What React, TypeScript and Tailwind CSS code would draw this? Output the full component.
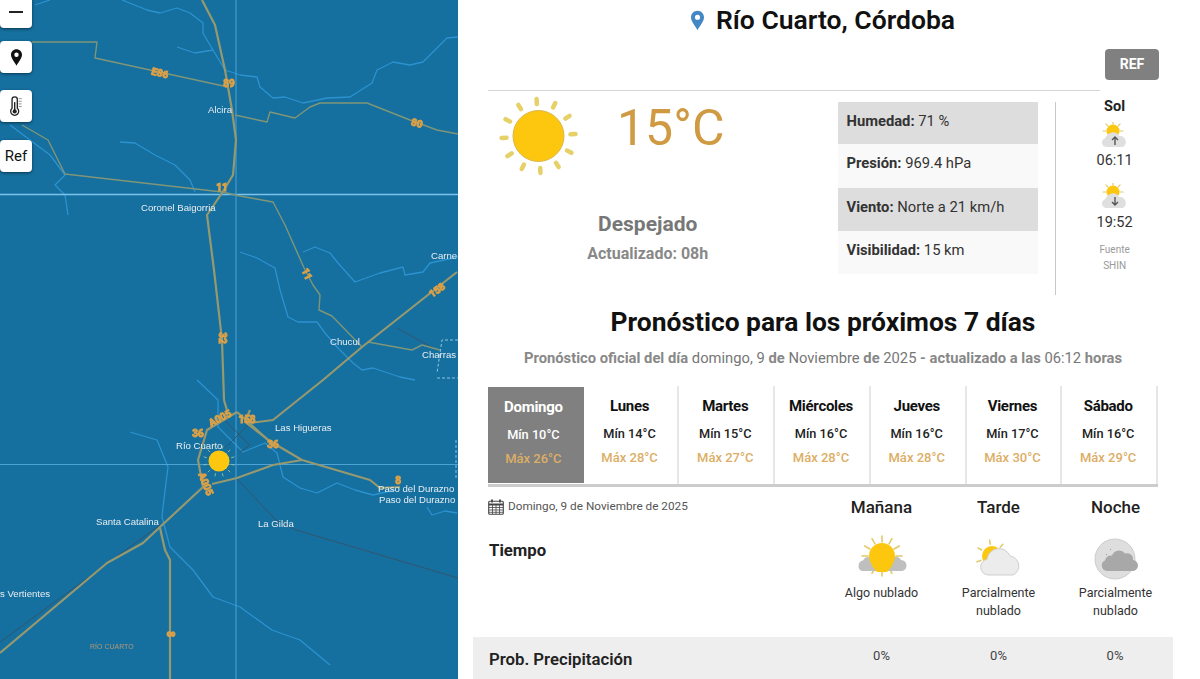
import React from 'react';

const thinRoads = [
  'M32 42 L97 42 L95 58 L150 70 L228 87',
  'M22 125 L48 140 L65 174 L222 192 L240 196 L273 202 L285 225 L305 270 L313 285 L320 295 L319 310 L332 316 L362 347',
  'M235 115 L267 122 L270 112 L295 118 L310 107 L320 103 L367 103 L410 120 L437 130 L458 134',
  'M368 342 L412 350 L422 345 L440 350',
];

const mainRoads = [
  'M202 0 L215 25 L225 70 L232 110 L236 140 L233 175 L222 193 L207 215 L214 270 L222 340 L224 400 L228 414',
  'M237 412 L207 430 L198 460 L203 487 L160 527 L143 543 L107 563 L0 653',
  'M237 412 L268 440 L302 460 L370 480 L380 488 L400 487',
  'M212 484 L237 478 L273 465 L302 460',
  'M160 528 L165 550 L170 560 L170 679',
  'M250 423 L273 420 L323 380 L362 347 L457 272',
  'M250 410 L245 422 L275 445',
];

const rails = [
  'M0 642 L160 525',
  'M397 328 L437 350',
  'M236 478 L276 520 L296 530 L458 578',
  'M224 420 L250 445 L240 452',
  'M250 423 L225 448',
];

const rivers = [
  'M122 0 L147 10 L160 13 L177 8 L190 13 L203 23 L203 33 L213 50 L225 70 L240 75 L257 77 L260 87 L273 98 L285 97 L303 103 L327 98 L350 97 L372 83 L377 70 L393 62 L410 65 L423 62 L447 38 L458 37',
  'M177 47 L195 53 L213 50',
  'M120 142 L135 143 L155 155 L175 165 L190 180 L195 192',
  'M10 125 L30 140 L50 155 L65 175 L55 185 L65 195 L68 215',
  'M240 252 L257 258 L275 268 L280 290 L288 317 L298 322 L317 322 L325 333 L337 347 L353 363 L362 370 L373 368 L400 377 L415 380',
  'M303 252 L315 247 L330 253 L338 263 L355 282 L380 273 L403 267 L405 275 L423 272 L430 263 L458 257',
  'M197 380 L218 400 L218 427 L243 452 L265 443 L277 453 L283 477 L300 488 L317 493 L337 483 L355 490 L373 495 L395 490',
  'M427 507 L432 515 L445 511 L457 513',
  'M130 432 L157 440 L168 467 L163 507 L162 517 L170 547 L193 570 L213 597 L240 607 L272 630 L300 640 L330 665',
  'M35 5 L50 0',
];

const shields = [
  { x: 160, y: 73, t: 'E86', r: 15 },
  { x: 229, y: 83, t: '89', r: 0 },
  { x: 417, y: 123, t: '80', r: 15 },
  { x: 222, y: 187, t: '11', r: 0 },
  { x: 307, y: 274, t: '11', r: 65 },
  { x: 437, y: 290, t: '158', r: -35 },
  { x: 198, y: 433, t: '36', r: 0 },
  { x: 220, y: 418, t: 'A005', r: -28 },
  { x: 247, y: 419, t: '158', r: 0 },
  { x: 273, y: 444, t: '36', r: 0 },
  { x: 206, y: 484, t: 'A005', r: 68 },
  { x: 398, y: 480, t: '8', r: 0 },
  { x: 170, y: 634, t: '8', r: 90 },
  { x: 222, y: 338, t: '32', r: 90 },
];

const labels = [
  { x: 208, y: 113, t: 'Alcira' },
  { x: 141, y: 211, t: 'Coronel Baigorria' },
  { x: 431, y: 259, t: 'Carne' },
  { x: 330, y: 345, t: 'Chucul' },
  { x: 422, y: 358, t: 'Charras' },
  { x: 176, y: 449, t: 'Río Cuarto' },
  { x: 275, y: 431, t: 'Las Higueras' },
  { x: 378, y: 492, t: 'Paso del Durazno' },
  { x: 379, y: 503, t: 'Paso del Durazno' },
  { x: 258, y: 527, t: 'La Gilda' },
  { x: 96, y: 525, t: 'Santa Catalina' },
  { x: 0, y: 597, t: 's Vertientes' },
];

function Rays({ cx, cy, inner, outer, width, color, start = 0, count = 12 }: { cx: number; cy: number; inner: number; outer: number; width: number; color: string; start?: number; count?: number }) {
  return (
    <g stroke={color} strokeWidth={width} strokeLinecap="round">
      {Array.from({ length: count }).map((_, i) => (
        <line key={i} x1={cx} y1={cy - inner} x2={cx} y2={cy - outer} transform={`rotate(${start + (i * 360) / count} ${cx} ${cy})`} />
      ))}
    </g>
  );
}

function MapCanvas() {
  return (
    <svg viewBox="0 0 458 679" className="block h-full w-full blur-[0.4px]">
      <rect width="458" height="679" fill="#156f9f" />
      <g fill="none" stroke="#2c92d0" strokeWidth="1.3" strokeLinejoin="round">
        {rivers.map((d, i) => (
          <path key={i} d={d} />
        ))}
      </g>
      <path d="M458 340 L442 340 L437 373 M437 378 L458 378 M456 440 L456 480" fill="none" stroke="#8fc4e4" strokeWidth="1" strokeDasharray="3 2" />
      <line x1="0" y1="194.5" x2="458" y2="194.5" stroke="#7cc3ee" strokeWidth="1.4" />
      <line x1="0" y1="464.5" x2="458" y2="464.5" stroke="#4ea3d6" strokeWidth="1" />
      <line x1="236" y1="0" x2="236" y2="679" stroke="#4ea3d6" strokeWidth="1" />
      <g fill="none" stroke="#33566f" strokeWidth="1">
        {rails.map((d, i) => (
          <path key={i} d={d} />
        ))}
      </g>
      <g fill="none" stroke="#7f9678" strokeWidth="1.4" strokeLinejoin="round">
        {thinRoads.map((d, i) => (
          <path key={i} d={d} />
        ))}
      </g>
      <g fill="none" stroke="#96996f" strokeWidth="2.2" strokeLinejoin="round">
        {mainRoads.map((d, i) => (
          <path key={i} d={d} />
        ))}
      </g>
      {shields.map((s, i) => (
        <text key={i} x={s.x} y={s.y + 3.5} textAnchor="middle" transform={`rotate(${s.r} ${s.x} ${s.y})`} className="fill-[#d9a048] stroke-[#d9a048] stroke-[1px] font-['Roboto',sans-serif] text-[10px] font-bold">
          {s.t}
        </text>
      ))}
      {labels.map((l, i) => (
        <text key={i} x={l.x} y={l.y} className="fill-[#e8eef2] font-['Liberation_Sans',sans-serif] text-[9.6px]">
          {l.t}
        </text>
      ))}
      <text x="90" y="649" className="fill-[#b39a78] font-['Liberation_Sans',sans-serif] text-[7px]">RÍO CUARTO</text>
      <circle cx="219" cy="461" r="10.5" fill="#fdc60f" />
      <Rays cx={219} cy={461} inner={13} outer={15.5} width={0.8} color="#9bc89a" start={15} />
    </svg>
  );
}

function Pin({ className, color }: { className: string; color: string }) {
  return (
    <svg viewBox="0 0 16 24" className={className}>
      <path fillRule="evenodd" d="M8 0C3.6 0 0 3.5 0 8c0 5.4 6 11.6 8 16 2-4.4 8-10.6 8-16 0-4.5-3.6-8-8-8zm0 11.2A3.2 3.2 0 1 1 8 4.8a3.2 3.2 0 0 1 0 6.4z" fill={color} />
    </svg>
  );
}

function Thermometer() {
  return (
    <svg viewBox="0 0 16 24" className="h-[21px] w-[14px]" fill="none" stroke="#222">
      <path d="M3.5 14V4a3 3 0 0 1 6 0v10a4.6 4.6 0 1 1-6 0z" strokeWidth="1.5" />
      <circle cx="6.5" cy="17.6" r="2.4" fill="#222" stroke="none" />
      <path d="M6.5 17V7" strokeWidth="1.6" />
      <path d="M11 3h3.5M11 6h3.5M11 9h3.5M11 12h3.5" strokeWidth="1" stroke="#888" />
    </svg>
  );
}

function SunIcon() {
  return (
    <svg viewBox="0 0 80 80" className="h-[80px] w-[80px] shrink-0">
      <Rays cx={39.5} cy={40} inner={32} outer={37} width={4.5} color="#e6d068" start={-3} />
      <circle cx="39.5" cy="40" r="25.5" fill="#fdc60f" stroke="#dcb64d" strokeWidth="1" />
    </svg>
  );
}

function MorningIcon() {
  return (
    <svg viewBox="0 0 50 48" className="h-[48px] w-[50px]">
      <Rays cx={25} cy={21} inner={14} outer={20} width={1.6} color="#e0ca6a" start={0} />
      <path d="M5 36 a5.5 5.5 0 0 1 1-10.5 a6 6 0 0 1 8-3 h22 a6 6 0 0 1 8 2.5 a5.2 5.2 0 0 1 0 11 z" fill="#bfbfbf" />
      <circle cx="25" cy="21" r="13" fill="#fdc60f" />
      <path d="M13 25 h24 l-2 6 -5 6 h-10 l-5-6 z" fill="#fdc60f" />
    </svg>
  );
}

function AfternoonIcon() {
  return (
    <svg viewBox="0 0 50 48" className="h-[48px] w-[50px]">
      <Rays cx={18} cy={21} inner={12} outer={16} width={1.6} color="#e0ca6a" start={-60} count={7} />
      <circle cx="18" cy="21" r="10" fill="#fdc60f" />
      <path d="M14 40 a8 8 0 0 1-1-15.8 a12 12 0 0 1 23-3.2 a10 10 0 0 1 3 19 z" fill="#ececec" stroke="#cfcfcf" strokeWidth="1" />
    </svg>
  );
}

function NightIcon() {
  return (
    <svg viewBox="0 0 50 48" className="h-[48px] w-[50px]">
      <circle cx="24" cy="24" r="20" fill="#dedede" stroke="#cdcdcd" strokeWidth="1" />
      <path d="M15 19l1 1M19 14l1 1" stroke="#999" strokeWidth="1" />
      <path d="M16 36 a5.5 5.5 0 0 1-2-10.5 a6 6 0 0 1 7-5 a7.5 7.5 0 0 1 13-2 a6 6 0 0 1 8 6.5 a5.5 5.5 0 0 1-1 11 z" fill="#a8a8a8" />
    </svg>
  );
}

function SunriseIcon({ down }: { down?: boolean }) {
  return (
    <svg viewBox="0 0 26 26" className="h-[26px] w-[26px]">
      <Rays cx={11} cy={9} inner={7} outer={10} width={1.2} color="#e0ca6a" start={-90} count={8} />
      <circle cx="11" cy="9" r="6.5" fill="#fdc60f" />
      <path d="M5 25 a4.5 4.5 0 0 1-1-9 a7 7 0 0 1 13-2 a6 6 0 0 1 4 11 z" fill="#dfdfdf" />
      {down ? (
        <path d="M13 14v8M10 19l3 3 3-3" stroke="#555" strokeWidth="1.4" fill="none" />
      ) : (
        <path d="M13 23v-8M10 18l3-3 3 3" stroke="#555" strokeWidth="1.4" fill="none" />
      )}
    </svg>
  );
}

function CalendarIcon() {
  return (
    <svg viewBox="0 0 16 16" className="h-[16px] w-[16px] shrink-0" fill="none" stroke="#444">
      <rect x="0.7" y="2.2" width="14.6" height="13.1" rx="1" strokeWidth="1.1" />
      <path d="M1 5.5h14" strokeWidth="2" />
      <path d="M4 0.5v3M12 0.5v3" strokeWidth="1.8" />
      <path d="M1 8.5h14M1 11h14M1 13.3h14M4.5 6v9M8 6v9M11.5 6v9" strokeWidth="0.8" />
    </svg>
  );
}

const stats = [
  { label: 'Humedad:', value: '71 %', bg: 'bg-[#dddddd]', h: 'h-[42px]' },
  { label: 'Presión:', value: '969.4 hPa', bg: 'bg-[#f9f9f9]', h: 'h-[44px]' },
  { label: 'Viento:', value: 'Norte a 21 km/h', bg: 'bg-[#dddddd]', h: 'h-[43px]' },
  { label: 'Visibilidad:', value: '15 km', bg: 'bg-[#f9f9f9]', h: 'h-[43px]' },
];

const days = [
  { name: 'Domingo', min: 10, max: 26 },
  { name: 'Lunes', min: 14, max: 28 },
  { name: 'Martes', min: 15, max: 27 },
  { name: 'Miércoles', min: 16, max: 28 },
  { name: 'Jueves', min: 16, max: 28 },
  { name: 'Viernes', min: 17, max: 30 },
  { name: 'Sábado', min: 16, max: 29 },
];

const periods = [
  { name: 'Mañana', icon: <MorningIcon />, text: 'Algo nublado' },
  { name: 'Tarde', icon: <AfternoonIcon />, text: 'Parcialmente nublado' },
  { name: 'Noche', icon: <NightIcon />, text: 'Parcialmente nublado' },
];

export default function App() {
  return (
    <div className="flex h-[679px] w-[1200px] overflow-hidden bg-white font-['Roboto',sans-serif]">
      {/* Map */}
      <div className="relative h-full w-[458px] shrink-0 overflow-hidden">
        <MapCanvas />
        <div className="absolute -top-1 left-0 flex w-8 flex-col">
          <button className="flex h-8 items-center justify-center rounded-[4px] bg-white shadow-[0_1px_3px_rgba(0,0,0,0.5)]">
            <span className="h-[2px] w-[14px] bg-[#222]" />
          </button>
          <button className="mt-[13px] flex h-8 items-center justify-center rounded-[4px] bg-white shadow-[0_1px_3px_rgba(0,0,0,0.5)]">
            <Pin className="h-[17px] w-[11px]" color="#111" />
          </button>
          <button className="mt-[17px] flex h-8 items-center justify-center rounded-[4px] bg-white shadow-[0_1px_3px_rgba(0,0,0,0.5)]">
            <Thermometer />
          </button>
          <button className="mt-[18px] flex h-8 items-center justify-center rounded-[4px] bg-white text-[15px] text-[#111] shadow-[0_1px_3px_rgba(0,0,0,0.5)]">
            Ref
          </button>
        </div>
      </div>

      {/* Weather panel */}
      <div className="w-[742px] pl-[15px] pr-[27px]">
        <div className="flex h-[49px] justify-center pt-[4px]">
          <div className="flex h-[32px] items-center gap-[12px]">
            <Pin className="h-[21px] w-[13px]" color="#4288c4" />
            <span className="text-[26.5px] font-semibold text-[#111]">Río Cuarto, Córdoba</span>
          </div>
        </div>

        <div className="flex justify-end pr-[14px]">
          <button className="h-[31px] w-[54px] rounded-[4px] bg-[#808080] text-[14px] font-bold text-white">REF</button>
        </div>
        <div className="ml-[15px] mt-[10px] h-[1px] w-[612px] bg-[#d5d5d5]" />

        {/* Current conditions */}
        <div className="ml-[15px] flex h-[204px] items-start">
          <div className="w-[320px]">
            <div className="flex items-start pl-[11px] pt-[5px]">
              <SunIcon />
              <span className="ml-[38px] text-[50px] font-normal leading-[64px] text-[#d09a42]">15°C</span>
            </div>
            <p className="mt-[35px] text-center text-[21px] font-bold leading-[26px] text-[#777777]">Despejado</p>
            <p className="mt-[7px] text-center text-[16px] font-bold leading-[20px] text-[#888888]">Actualizado: 08h</p>
          </div>
          <div className="ml-[30px] mt-[11px] w-[201px] text-[14.75px] text-[#333]">
            {stats.map((s) => (
              <div key={s.label} className={`${s.bg} ${s.h} pl-[9px] pt-[10px] leading-[18px]`}>
                <b className="font-bold">{s.label}</b> {s.value}
              </div>
            ))}
          </div>
          <div className="ml-[17px] mt-[11px] h-[193px] w-px bg-[#c8c8c8]" />
          <div className="flex w-[117px] flex-col items-center text-[14.5px] text-[#333]">
            <b className="mt-[7px] leading-[18px] text-[#222]">Sol</b>
            <div className="mt-[6px]"><SunriseIcon /></div>
            <span className="mt-[4px] leading-[18px]">06:11</span>
            <div className="mt-[13px]"><SunriseIcon down /></div>
            <span className="mt-[5px] leading-[18px]">19:52</span>
            <span className="mt-[10px] text-[10px] leading-[16px] text-[#999]">Fuente</span>
            <span className="text-[10px] leading-[16px] text-[#999]">SHIN</span>
          </div>
        </div>

        {/* Forecast */}
        <h2 className="mt-[10px] text-center text-[26.4px] font-bold leading-[34px] text-[#111]">Pronóstico para los próximos 7 días</h2>
        <p className="mt-[9px] text-center text-[14.75px] font-bold leading-[20px] text-[#888888]">
          Pronóstico oficial del día <span className="font-normal text-[#777]">domingo, 9</span> de <span className="font-normal text-[#777]">Noviembre</span> de <span className="font-normal text-[#777]">2025</span> - actualizado a las <span className="font-normal text-[#777]">06:12</span> horas
        </p>

        <div className="ml-[15px] mt-[18px] grid h-[101px] w-[670px] grid-cols-7 border-b-[3px] border-[#cccccc]">
          {days.map((d, i) => (
            <div key={d.name} className={i === 0 ? 'mb-[1px] mt-[1px] bg-[#808080] pr-[5px] text-center' : 'border-r-2 border-[#e6e6e6] pr-[2px] text-center'}>
              <div className={`mt-[10px] text-[15px] font-bold leading-[20px] tracking-[-0.3px] ${i === 0 ? 'text-white' : 'text-[#111]'}`}>{d.name}</div>
              <div className={`mt-[10px] text-[12.75px] font-medium leading-[16px] ${i === 0 ? 'text-white' : 'text-[#222]'}`}>Mín {d.min}°C</div>
              <div className="mt-[8px] text-[13px] font-medium leading-[16px] text-[#dcae66]">Máx {d.max}°C</div>
            </div>
          ))}
        </div>

        {/* Day detail */}
        <div className="ml-[15px] grid grid-cols-[335px_117px_117px_117px] pt-[10px]">
          <div className="flex h-[20px] items-center gap-[4px] text-[11.75px] text-[#555]">
            <CalendarIcon />
            <span>Domingo, 9 de Noviembre de 2025</span>
          </div>
          {periods.map((p) => (
            <div key={p.name} className="text-center text-[17px] font-medium leading-[20px] text-[#222]">{p.name}</div>
          ))}
          <div className="pl-[1px] pt-[23px] text-[16.75px] font-bold leading-[20px] text-[#222]">Tiempo</div>
          {periods.map((p) => (
            <div key={p.name} className="flex h-[120px] flex-col items-center pt-[18px]">
              {p.icon}
              <span className="mt-[1px] w-[90px] text-center text-[12.5px] leading-[18px] text-[#333]">{p.text}</span>
            </div>
          ))}
        </div>
        <div className="grid h-[42px] grid-cols-[350px_117px_117px_116px] bg-[#eeeeee]">
          <div className="pl-[16px] pt-[12px] text-[16.75px] font-semibold leading-[20px] text-[#222]">Prob. Precipitación</div>
          {periods.map((p) => (
            <div key={p.name} className="pt-[10px] text-center text-[13px] leading-[18px] text-[#444]">0%</div>
          ))}
        </div>
      </div>
    </div>
  );
}
